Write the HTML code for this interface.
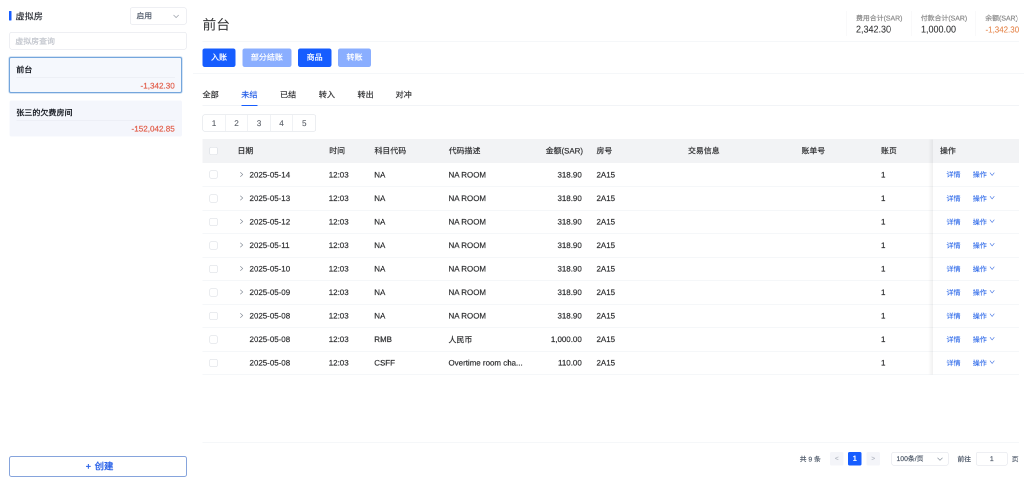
<!DOCTYPE html>
<html lang="zh-CN">
<head>
<meta charset="utf-8">
<title>前台</title>
<style>
*{box-sizing:border-box;margin:0;padding:0}
html,body{width:1024px;height:481px;overflow:hidden;background:#fff}
body{font-family:"Liberation Sans",sans-serif;color:#303133;text-rendering:geometricPrecision;-webkit-font-smoothing:antialiased;-webkit-text-stroke:.4px currentColor}
#app{position:absolute;left:0;top:0;width:2048px;height:962px;transform:scale(.5);transform-origin:0 0;will-change:transform;background:#fff;font-size:16px;overflow:hidden}
.abs{position:absolute}
/* ---------- sidebar ---------- */
aside{position:absolute;left:0;top:0;width:386px;height:962px}
.sb-bar{position:absolute;left:18px;top:22px;width:5px;height:19px;background:#165dff;border-radius:1px}
.sb-title{-webkit-text-stroke:.25px currentColor;position:absolute;left:31px;top:20px;height:26px;line-height:26px;font-size:18.3px;color:#1d2129;white-space:nowrap;width:90px;overflow:hidden}
.sel{position:absolute;border:1px solid #dcdfe6;border-radius:4px;background:#fff;white-space:nowrap;overflow:hidden}
.sb-sel{left:260px;top:15px;width:113px;height:34px;line-height:34px;padding-left:12px;font-size:15.6px;color:#4e5969}
.sb-sel svg{position:absolute;right:13.5px;top:11.5px}
.sb-search{position:absolute;left:18.5px;top:64px;width:354.5px;height:35px;line-height:37px;border:1px solid #dcdfe6;border-radius:4px;padding-left:11px;font-size:15.9px;color:#c0c4cc;white-space:nowrap;overflow:hidden}
.card{position:absolute;left:18.5px;width:345px;height:72px;border-radius:4px;overflow:hidden}
.card .nm{-webkit-text-stroke:0;position:absolute;left:14px;top:12px;width:300px;height:26px;line-height:26px;font-size:16.1px;font-weight:bold;color:#1d2129;white-space:nowrap;overflow:hidden}
.card .ln{position:absolute;left:14px;right:14px;top:40px;height:1px;background:#e5e8ef}
.card .amt{position:absolute;right:14px;top:46px;height:22px;line-height:22px;font-size:16.2px;color:#e2604d;white-space:nowrap}
.card1{top:114px;left:18px;width:346px;background:#f5f8fd;border:2px solid #74a6dc;box-shadow:0 0 1.5px .5px rgba(108,159,216,.55)}
.card1 .nm{left:12.5px;top:10.5px} .card1 .ln{left:12.5px;right:12.5px;top:38.5px} .card1 .amt{right:12.5px;top:44.5px}
.card2{top:201px;background:#f4f6fc}
.create{-webkit-text-stroke:0;position:absolute;left:18px;top:912px;width:356px;height:42px;line-height:37px;border:2px solid #86a4dc;border-radius:5px;text-align:center;font-size:18.8px;word-spacing:2px;padding-left:6px;font-weight:bold;color:#2a62e8;background:#fff;white-space:nowrap;overflow:hidden}
/* ---------- main ---------- */
main{position:absolute;left:386px;top:0;width:1662px;height:962px}
h1{-webkit-text-stroke:0;position:absolute;left:19px;top:30px;height:40px;line-height:40px;font-size:27.5px;font-weight:normal;color:#303133;white-space:nowrap;width:70px;overflow:hidden}
.hl{position:absolute;height:1px;background:#ebeef2}
.stats{position:absolute;left:1306px;top:22px;width:345.5px;height:50px}
.stat{position:absolute;top:0;height:50px;border-left:1px solid #f2f3f5;white-space:nowrap}
.stat .lb{position:absolute;left:19px;top:6px;height:18px;line-height:18px;font-size:13.8px;color:#8c8c8c}
.stat .vl{-webkit-text-stroke:.15px currentColor;position:absolute;left:19px;top:24.5px;height:24px;line-height:24px;font-size:19.7px;color:#303133;transform:scaleX(.915);transform-origin:0 50%}
.btn{position:absolute;top:96.5px;height:37px;line-height:38px;border-radius:4.5px;background:#165dff;color:#fff;text-align:center;font-size:16px;white-space:nowrap;overflow:hidden}
.btn.dis{background:#8aaeff}
.tabs{position:absolute;left:19px;top:170px;width:1632.5px;height:41px;border-bottom:1px solid #e5e8ef}
.tab{position:absolute;top:8px;width:34px;height:24px;line-height:24px;font-size:16.2px;color:#303133;white-space:nowrap;overflow:hidden}
.tab.on{color:#2a62e8}
.tabs .ink{position:absolute;left:77.5px;top:39.5px;width:32.5px;height:2.2px;background:#165dff}
.pgs{position:absolute;left:19px;top:229px;width:227px;height:34px;border:1px solid #d8dce3;border-radius:4px;display:flex;overflow:hidden;background:#fff}
.pgs span{display:block;width:45.2px;height:32px;line-height:34px;text-align:center;font-size:16.4px;color:#5a5f68;-webkit-text-stroke:.2px currentColor;border-right:1px solid #e1e4ea}
.pgs span:last-child{border-right:0}
table{position:absolute;left:19px;top:278.5px;width:1632.5px;border-collapse:collapse;table-layout:fixed;font-size:15.9px}
th,td{padding:0;text-align:left;white-space:nowrap;overflow:hidden;vertical-align:middle;font-weight:normal}
thead tr{height:47.5px}
.thbg{position:absolute;left:19px;top:277.5px;width:1632.5px;height:48.5px;background:#f2f3f5}
th{color:#303133;font-size:15.8px;padding-bottom:3px}
tbody tr{height:47px}
tbody td{border-bottom:1px solid #ebeef2;color:#303133;padding-top:3px}
.c-chk{width:57px;padding-left:14px}
td.c-chk{padding-top:0}
th.c-chk{padding-bottom:1px}
.chk{display:block;width:16px;height:16px;border:1px solid #d4d8df;border-radius:3px;background:#fff}
.c-date{width:182.5px;padding-left:13px}
td.c-date{padding-left:17px}
.exp{display:inline-block;vertical-align:baseline;margin-right:12px;position:relative;top:0px}
.exp-sp{display:inline-block;width:20px;height:1px}
.dt{display:inline}
.c-time{width:90.5px;padding-left:14px}
td.c-time{padding-left:13px}
.c-code{width:148.5px;padding-left:14px}
td.c-code{padding-left:13.5px}
.c-desc{width:186px;padding-left:14px}
td.c-desc{padding-left:13.5px}
td.c-desc.cjk{padding-top:0;padding-bottom:1px}
.c-amt{width:110.5px;text-align:right;padding-right:14px}
td.c-amt{padding-right:16.5px}
.c-room{width:182px;padding-left:13px}
.c-info{width:227px;padding-left:14px}
.c-bill{width:159px;padding-left:14px}
.c-page{width:118px;padding-left:14px}
td.c-page{padding-left:14px}
.c-op{width:171.5px;padding-left:14px}
td.c-op{padding-left:27px;background:#fff;font-size:14.1px;padding-top:0;padding-bottom:0}
.lk{color:#2563e8;-webkit-text-stroke:.15px currentColor;display:inline-block;vertical-align:middle}
.lk1{width:52.5px}
.lk2{width:33.5px}
.dd{display:inline-block;vertical-align:middle;margin-top:-3px}
.shadow{position:absolute;left:1470px;top:278.5px;width:10px;height:470.5px;background:linear-gradient(to right,rgba(0,0,0,0),rgba(0,0,0,.06))}
/* ---------- pager ---------- */
.pager{position:absolute;left:0;top:904px;width:1662px;height:27px;font-size:13.5px;color:#4e5969;line-height:27px;white-space:nowrap}
.pager > *{position:absolute;top:0;height:27px;line-height:30px}
.pager .pb{width:27px;background:#f4f5f9;border-radius:3px;text-align:center;color:#b4b9c3;font-size:13px;line-height:26px}
.pager .pb.cur{-webkit-text-stroke:0;background:#165dff;color:#fff;font-weight:bold;font-size:15.5px;line-height:27px}
.pager .sel{line-height:25px;font-size:13.7px;color:#4e5969;padding-left:9px}
</style>
</head>
<body>
<div id="app">
  <aside>
    <div class="sb-bar"></div>
    <div class="sb-title">虚拟房</div>
    <div class="sel sb-sel">启用<svg viewBox="0 0 12 8" width="12.5" height="9"><path d="M1 1.5 L6 6.5 L11 1.5" fill="none" stroke="#a0a5ae" stroke-width="1.4"/></svg></div>
    <div class="sb-search">虚拟房查询</div>
    <div class="card card1"><div class="nm">前台</div><div class="ln"></div><div class="amt">-1,342.30</div></div>
    <div class="card card2"><div class="nm">张三的欠费房间</div><div class="ln"></div><div class="amt">-152,042.85</div></div>
    <div class="create">+ 创建</div>
  </aside>
  <main>
    <h1>前台</h1>
    <div class="stats">
      <div class="stat" style="left:0;width:129.5px"><div class="lb">费用合计(SAR)</div><div class="vl">2,342.30</div></div>
      <div class="stat" style="left:129.5px;width:129px"><div class="lb">付款合计(SAR)</div><div class="vl">1,000.00</div></div>
      <div class="stat" style="left:258.5px;width:87px"><div class="lb">余额(SAR)</div><div class="vl" style="color:#e5854a"><span style="font-size:17.4px">-1,342.30</span></div></div>
    </div>
    <div class="hl" style="left:19px;top:81.5px;width:1632.5px"></div>
    <div class="btn" style="left:19px;width:66px">入账</div>
    <div class="btn dis" style="left:99px;width:97.5px">部分结账</div>
    <div class="btn" style="left:210px;width:66.5px">商品</div>
    <div class="btn dis" style="left:290px;width:66px">转账</div>
    <div class="hl" style="left:0;top:146px;width:1662px"></div>
    <div class="tabs">
      <div class="tab" style="left:0">全部</div>
      <div class="tab on" style="left:77.5px">未结</div>
      <div class="tab" style="left:155px">已结</div>
      <div class="tab" style="left:232.5px">转入</div>
      <div class="tab" style="left:310px">转出</div>
      <div class="tab" style="left:386px">对冲</div>
      <div class="ink"></div>
    </div>
    <div class="pgs"><span>1</span><span>2</span><span>3</span><span>4</span><span>5</span></div>
    <div class="thbg"></div>
    <table>
      <thead><tr>
        <th class="c-chk"><span class="chk"></span></th>
        <th class="c-date">日期</th>
        <th class="c-time">时间</th>
        <th class="c-code">科目代码</th>
        <th class="c-desc">代码描述</th>
        <th class="c-amt">金额(SAR)</th>
        <th class="c-room">房号</th>
        <th class="c-info">交易信息</th>
        <th class="c-bill">账单号</th>
        <th class="c-page">账页</th>
        <th class="c-op">操作</th>
      </tr></thead>
      <tbody>
      <tr>
        <td class="c-chk"><span class="chk"></span></td>
        <td class="c-date"><svg class="exp" viewBox="0 0 8 12" width="8" height="12"><path d="M1.5 1.5 L6.5 6 L1.5 10.5" fill="none" stroke="#7a828e" stroke-width="1.15"/></svg><span class="dt">2025-05-14</span></td>
        <td class="c-time">12:03</td>
        <td class="c-code">NA</td>
        <td class="c-desc">NA ROOM</td>
        <td class="c-amt">318.90</td>
        <td class="c-room">2A15</td>
        <td class="c-info"></td>
        <td class="c-bill"></td>
        <td class="c-page">1</td>
        <td class="c-op"><a class="lk lk1">详情</a><a class="lk lk2">操作</a><svg class="dd" viewBox="0 0 12 9" width="10.5" height="8.5"><path d="M1 1.2 L6 7.5 L11 1.2" fill="none" stroke="#3468e0" stroke-width="1.25"/></svg></td>
      </tr>
      <tr>
        <td class="c-chk"><span class="chk"></span></td>
        <td class="c-date"><svg class="exp" viewBox="0 0 8 12" width="8" height="12"><path d="M1.5 1.5 L6.5 6 L1.5 10.5" fill="none" stroke="#7a828e" stroke-width="1.15"/></svg><span class="dt">2025-05-13</span></td>
        <td class="c-time">12:03</td>
        <td class="c-code">NA</td>
        <td class="c-desc">NA ROOM</td>
        <td class="c-amt">318.90</td>
        <td class="c-room">2A15</td>
        <td class="c-info"></td>
        <td class="c-bill"></td>
        <td class="c-page">1</td>
        <td class="c-op"><a class="lk lk1">详情</a><a class="lk lk2">操作</a><svg class="dd" viewBox="0 0 12 9" width="10.5" height="8.5"><path d="M1 1.2 L6 7.5 L11 1.2" fill="none" stroke="#3468e0" stroke-width="1.25"/></svg></td>
      </tr>
      <tr>
        <td class="c-chk"><span class="chk"></span></td>
        <td class="c-date"><svg class="exp" viewBox="0 0 8 12" width="8" height="12"><path d="M1.5 1.5 L6.5 6 L1.5 10.5" fill="none" stroke="#7a828e" stroke-width="1.15"/></svg><span class="dt">2025-05-12</span></td>
        <td class="c-time">12:03</td>
        <td class="c-code">NA</td>
        <td class="c-desc">NA ROOM</td>
        <td class="c-amt">318.90</td>
        <td class="c-room">2A15</td>
        <td class="c-info"></td>
        <td class="c-bill"></td>
        <td class="c-page">1</td>
        <td class="c-op"><a class="lk lk1">详情</a><a class="lk lk2">操作</a><svg class="dd" viewBox="0 0 12 9" width="10.5" height="8.5"><path d="M1 1.2 L6 7.5 L11 1.2" fill="none" stroke="#3468e0" stroke-width="1.25"/></svg></td>
      </tr>
      <tr>
        <td class="c-chk"><span class="chk"></span></td>
        <td class="c-date"><svg class="exp" viewBox="0 0 8 12" width="8" height="12"><path d="M1.5 1.5 L6.5 6 L1.5 10.5" fill="none" stroke="#7a828e" stroke-width="1.15"/></svg><span class="dt">2025-05-11</span></td>
        <td class="c-time">12:03</td>
        <td class="c-code">NA</td>
        <td class="c-desc">NA ROOM</td>
        <td class="c-amt">318.90</td>
        <td class="c-room">2A15</td>
        <td class="c-info"></td>
        <td class="c-bill"></td>
        <td class="c-page">1</td>
        <td class="c-op"><a class="lk lk1">详情</a><a class="lk lk2">操作</a><svg class="dd" viewBox="0 0 12 9" width="10.5" height="8.5"><path d="M1 1.2 L6 7.5 L11 1.2" fill="none" stroke="#3468e0" stroke-width="1.25"/></svg></td>
      </tr>
      <tr>
        <td class="c-chk"><span class="chk"></span></td>
        <td class="c-date"><svg class="exp" viewBox="0 0 8 12" width="8" height="12"><path d="M1.5 1.5 L6.5 6 L1.5 10.5" fill="none" stroke="#7a828e" stroke-width="1.15"/></svg><span class="dt">2025-05-10</span></td>
        <td class="c-time">12:03</td>
        <td class="c-code">NA</td>
        <td class="c-desc">NA ROOM</td>
        <td class="c-amt">318.90</td>
        <td class="c-room">2A15</td>
        <td class="c-info"></td>
        <td class="c-bill"></td>
        <td class="c-page">1</td>
        <td class="c-op"><a class="lk lk1">详情</a><a class="lk lk2">操作</a><svg class="dd" viewBox="0 0 12 9" width="10.5" height="8.5"><path d="M1 1.2 L6 7.5 L11 1.2" fill="none" stroke="#3468e0" stroke-width="1.25"/></svg></td>
      </tr>
      <tr>
        <td class="c-chk"><span class="chk"></span></td>
        <td class="c-date"><svg class="exp" viewBox="0 0 8 12" width="8" height="12"><path d="M1.5 1.5 L6.5 6 L1.5 10.5" fill="none" stroke="#7a828e" stroke-width="1.15"/></svg><span class="dt">2025-05-09</span></td>
        <td class="c-time">12:03</td>
        <td class="c-code">NA</td>
        <td class="c-desc">NA ROOM</td>
        <td class="c-amt">318.90</td>
        <td class="c-room">2A15</td>
        <td class="c-info"></td>
        <td class="c-bill"></td>
        <td class="c-page">1</td>
        <td class="c-op"><a class="lk lk1">详情</a><a class="lk lk2">操作</a><svg class="dd" viewBox="0 0 12 9" width="10.5" height="8.5"><path d="M1 1.2 L6 7.5 L11 1.2" fill="none" stroke="#3468e0" stroke-width="1.25"/></svg></td>
      </tr>
      <tr>
        <td class="c-chk"><span class="chk"></span></td>
        <td class="c-date"><svg class="exp" viewBox="0 0 8 12" width="8" height="12"><path d="M1.5 1.5 L6.5 6 L1.5 10.5" fill="none" stroke="#7a828e" stroke-width="1.15"/></svg><span class="dt">2025-05-08</span></td>
        <td class="c-time">12:03</td>
        <td class="c-code">NA</td>
        <td class="c-desc">NA ROOM</td>
        <td class="c-amt">318.90</td>
        <td class="c-room">2A15</td>
        <td class="c-info"></td>
        <td class="c-bill"></td>
        <td class="c-page">1</td>
        <td class="c-op"><a class="lk lk1">详情</a><a class="lk lk2">操作</a><svg class="dd" viewBox="0 0 12 9" width="10.5" height="8.5"><path d="M1 1.2 L6 7.5 L11 1.2" fill="none" stroke="#3468e0" stroke-width="1.25"/></svg></td>
      </tr>
      <tr>
        <td class="c-chk"><span class="chk"></span></td>
        <td class="c-date"><span class="exp-sp"></span><span class="dt">2025-05-08</span></td>
        <td class="c-time">12:03</td>
        <td class="c-code">RMB</td>
        <td class="c-desc cjk">人民币</td>
        <td class="c-amt">1,000.00</td>
        <td class="c-room">2A15</td>
        <td class="c-info"></td>
        <td class="c-bill"></td>
        <td class="c-page">1</td>
        <td class="c-op"><a class="lk lk1">详情</a><a class="lk lk2">操作</a><svg class="dd" viewBox="0 0 12 9" width="10.5" height="8.5"><path d="M1 1.2 L6 7.5 L11 1.2" fill="none" stroke="#3468e0" stroke-width="1.25"/></svg></td>
      </tr>
      <tr>
        <td class="c-chk"><span class="chk"></span></td>
        <td class="c-date"><span class="exp-sp"></span><span class="dt">2025-05-08</span></td>
        <td class="c-time">12:03</td>
        <td class="c-code">CSFF</td>
        <td class="c-desc">Overtime room cha...</td>
        <td class="c-amt">110.00</td>
        <td class="c-room">2A15</td>
        <td class="c-info"></td>
        <td class="c-bill"></td>
        <td class="c-page">1</td>
        <td class="c-op"><a class="lk lk1">详情</a><a class="lk lk2">操作</a><svg class="dd" viewBox="0 0 12 9" width="10.5" height="8.5"><path d="M1 1.2 L6 7.5 L11 1.2" fill="none" stroke="#3468e0" stroke-width="1.25"/></svg></td>
      </tr>
      </tbody>
    </table>
    <div class="shadow"></div>
    <div class="hl" style="left:19px;top:884.5px;width:1632.5px"></div>
    <div class="pager">
      <span style="left:1213.5px">共 9 条</span>
      <span class="pb" style="left:1274px">&lt;</span>
      <span class="pb cur" style="left:1310px">1</span>
      <span class="pb" style="left:1347px">&gt;</span>
      <span class="sel" style="left:1397px;width:114px">100条/页<svg style="position:absolute;right:10px;top:9px" viewBox="0 0 12 8" width="12" height="8"><path d="M1 1.5 L6 6.5 L11 1.5" fill="none" stroke="#86909c" stroke-width="1.3"/></svg></span>
      <span style="left:1529px">前往</span>
      <span class="sel" style="left:1566px;width:63px;text-align:center;padding-left:0">1</span>
      <span style="left:1637.5px">页</span>
    </div>
  </main>
</div>
</body>
</html>
